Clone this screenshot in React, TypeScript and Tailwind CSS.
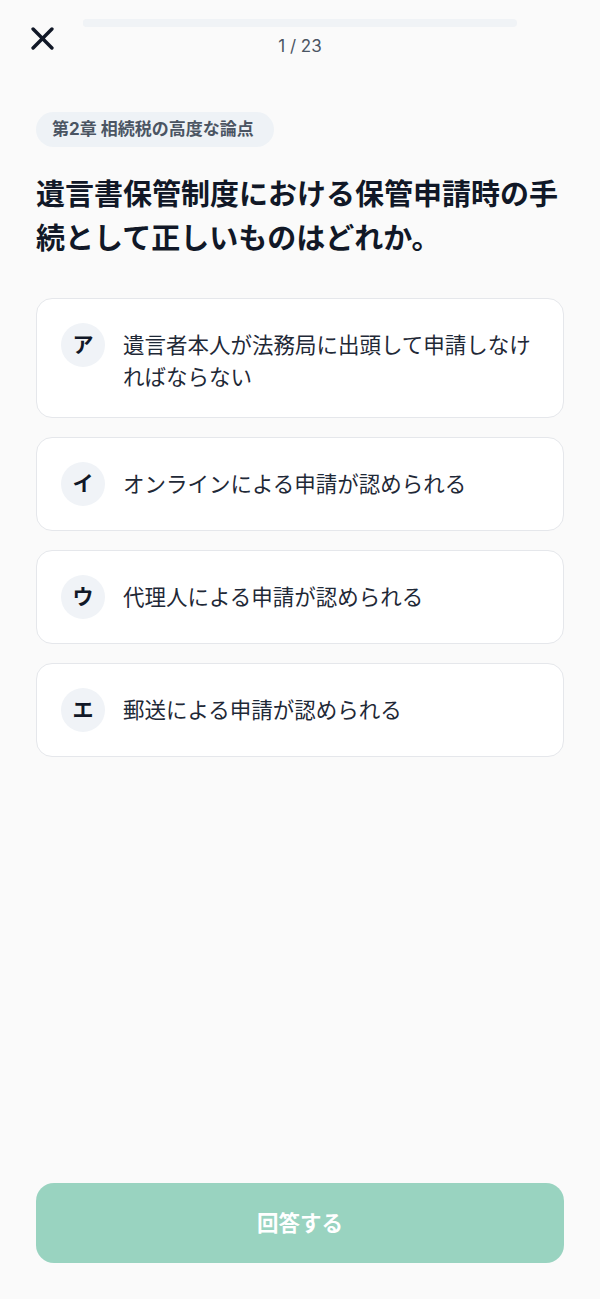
import { useState } from 'react';

const choices = [
  { key: 'ア', text: '遺言者本人が法務局に出頭して申請しなければならない' },
  { key: 'イ', text: 'オンラインによる申請が認められる' },
  { key: 'ウ', text: '代理人による申請が認められる' },
  { key: 'エ', text: '郵送による申請が認められる' },
];

export default function App() {
  const [selected, setSelected] = useState<string | null>(null);

  return (
    <div
      className="min-h-screen flex flex-col bg-[#fafafa] text-[#111827]"
      style={{ fontFamily: '"Inter", "Noto Sans CJK JP", "Noto Sans", sans-serif' }}
    >
      <header className="flex items-start px-5 pt-4">
        <button className="w-11 h-11 flex items-center justify-center text-[#111827]">
          <svg width="23" height="23" viewBox="0 0 22 22" fill="none" stroke="currentColor" strokeWidth="3.3" strokeLinecap="round">
            <path d="M2 2L20 20M20 2L2 20" />
          </svg>
        </button>
        <div className="flex-1 mx-[19px] pt-[3px] flex flex-col items-center">
          <div className="w-full h-2 rounded-full bg-[#f0f3f6]">
            <div className="h-full rounded-full bg-[#f0f3f6]" style={{ width: `${(1 / 23) * 100}%` }} />
          </div>
          <p className="mt-[7px] text-[17px] leading-6 text-[#4b5563]">1 / 23</p>
        </div>
        <div className="w-11 h-11" />
      </header>

      <main className="px-9 mt-[52px] flex-1 flex flex-col">
        <div>
          <span className="inline-block rounded-full bg-[#eef2f6] pl-4 pr-[20px] py-1.5 text-[17px] leading-[23px] font-bold text-[#4b5563]">
            第2章 相続税の高度な論点
          </span>
        </div>

        <h1 className="mt-[26px] text-[29px] leading-[44px] font-bold text-[#111827]">
          遺言書保管制度における保管申請時の手続として正しいものはどれか。
        </h1>

        <div className="mt-[37px] flex flex-col gap-[19px]">
          {choices.map((c) => (
            <button
              key={c.key}
              onClick={() => setSelected(c.key)}
              className={`flex items-start gap-[18px] text-left rounded-2xl border bg-white px-6 py-6 ${
                selected === c.key ? 'border-[#34a885]' : 'border-[#e5e7eb]'
              }`}
            >
              <span className="shrink-0 w-11 h-11 rounded-full bg-[#f0f3f7] flex items-center justify-center text-[21px] font-bold text-[#111827]">
                {c.key}
              </span>
              <span className="mt-1.5 text-[21.5px] leading-8 text-[#1f2937]">{c.text}</span>
            </button>
          ))}
        </div>

        <div className="flex-1" />

        <button
          className={`mb-9 h-20 w-full rounded-[18px] text-[21.5px] font-bold text-white ${
            selected ? 'bg-[#34a885]' : 'bg-[#99d3c0]'
          }`}
        >
          回答する
        </button>
      </main>
    </div>
  );
}
